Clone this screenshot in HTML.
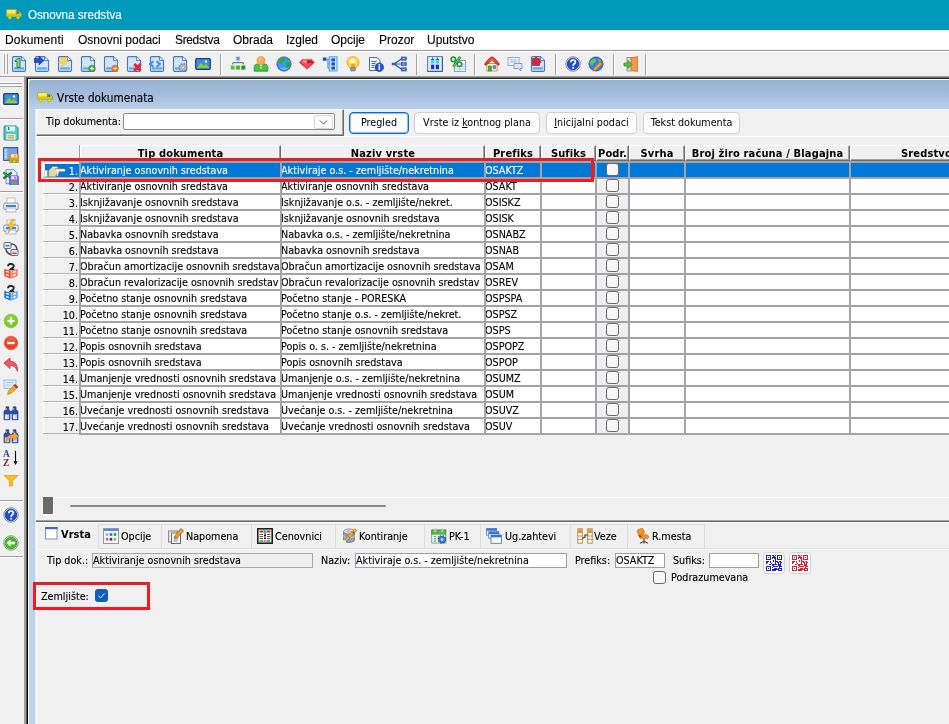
<!DOCTYPE html>
<html lang="sr"><head><meta charset="utf-8"><title>Osnovna sredstva</title>
<style>
*{box-sizing:border-box;margin:0;padding:0}
html{background:#f0f0f0}
html,body{width:949px;height:724px;overflow:hidden;background:#f0f0f0}
body{will-change:transform}
body{position:relative;font-family:"DejaVu Sans Condensed", "Liberation Sans", sans-serif;font-size:10.7px;color:#000;-webkit-font-smoothing:antialiased}
.a{position:absolute}
.t{position:absolute;white-space:nowrap;line-height:13px;height:13px;-webkit-text-stroke:.12px currentColor}
.b{font-weight:bold;font-size:11px;-webkit-text-stroke:0}
.menu{font-family:"Liberation Sans",sans-serif;font-size:12px;line-height:14px;height:14px}
.cell{-webkit-text-stroke:.12px currentColor;position:absolute;overflow:hidden;white-space:nowrap;line-height:13px;height:14px;padding-left:0;padding-top:1px}
.hd{position:absolute;height:16px;border-left:1px solid #fff;border-top:1px solid #fff;border-right:1px solid #696969;border-bottom:1px solid #696969;box-shadow:inset -1px -1px 0 #a0a0a0;text-align:center;line-height:14px;padding-top:1px;letter-spacing:.15px;overflow:hidden;white-space:nowrap}
.btn{position:absolute;height:22px;top:112px;border:1px solid #d0d0d0;border-radius:4px;background:#fdfdfd;text-align:center;line-height:20px;white-space:nowrap}
.ic{position:absolute;width:16px;height:16px}
.ic svg{display:block}
.cb{position:absolute;width:13px;height:13px;border:1px solid #6a6a6a;border-radius:3px;background:#f6f6f6}
.tab{position:absolute;top:524px;height:25px;border:1px solid #dcdcdc;background:#f0f0f0}
u{text-decoration:underline}
</style></head>
<body>
<div class="a" style="left:0;top:0;width:949px;height:30px;background:#0099bc"></div>
<div class="ic" style="left:6px;top:7px"><svg width="16" height="16" viewBox="0 0 16 16"><rect x=".6" y="2.500" width="9.800" height="7" rx=".8" fill="#e6d83a" stroke="#a8a838" stroke-width=".8"/><rect x="1.400" y="3.200" width="8.200" height="2.600" fill="#f4ec80"/><path d="M10.400 4.300h2.700l2.300 2.300v2.900h-5z" fill="#e2d430" stroke="#5a8a58" stroke-width=".8"/><rect x="11.200" y="5" width="2" height="1.900" fill="#3a6a98"/><rect x=".6" y="7.200" width="14.800" height="2.300" fill="#d4c418"/><circle cx="3.800" cy="10.600" r="1.500" fill="#f0e020" stroke="#a8a830" stroke-width=".6"/><circle cx="12" cy="10.600" r="1.500" fill="#f0e020" stroke="#a8a830" stroke-width=".6"/></svg></div>
<div class="t" style="left:28px;top:8px;font-family:Liberation Sans,sans-serif;font-size:12.5px;transform:scaleX(.93);transform-origin:0 0;line-height:15px;height:15px;color:#fff">Osnovna sredstva</div>
<div class="a" style="left:0;top:30px;width:949px;height:19px;background:#fff"></div>
<div class="t menu" style="left:5px;top:33px;letter-spacing:.15px;">Dokumenti</div>
<div class="t menu" style="left:78px;top:33px;">Osnovni podaci</div>
<div class="t menu" style="left:175px;top:33px;letter-spacing:-.35px;">Sredstva</div>
<div class="t menu" style="left:233px;top:33px;">Obrada</div>
<div class="t menu" style="left:286px;top:33px;">Izgled</div>
<div class="t menu" style="left:331px;top:33px;">Opcije</div>
<div class="t menu" style="left:379px;top:33px;">Prozor</div>
<div class="t menu" style="left:427px;top:33px;">Uputstvo</div>
<div class="a" style="left:0;top:50px;width:949px;height:1px;background:#a0a0a0"></div>
<div class="a" style="left:0;top:51px;width:949px;height:1px;background:#fff"></div>
<div class="a" style="left:3px;top:54px;width:1px;height:20px;background:#fff"></div><div class="a" style="left:4px;top:54px;width:1px;height:20px;background:#a0a0a0"></div>
<div class="a" style="left:6px;top:54px;width:1px;height:20px;background:#fff"></div><div class="a" style="left:7px;top:54px;width:1px;height:20px;background:#a0a0a0"></div>
<div class="ic" style="left:11px;top:56px"><svg width="16" height="16" viewBox="0 0 16 16"><path d="M1.500 1.800q0-1.200 1.200-1.200h7.800l4 4v9.600q0 1.200-1.200 1.200h-10.600q-1.200 0-1.200-1.200z" fill="#d4e4f8" stroke="#3f78c8" stroke-width="1.100"/><path d="M10.500 .8v3.700h3.800" fill="#f4f9ff" stroke="#3f78c8" stroke-width=".9"/><rect x="3" y="11.300" width="10" height="2.200" fill="#5aa8f0"/><path d="M4 4.5l3-2h2v9h-3v-6h-2z" fill="#8fd48f" stroke="#1f7a2f" stroke-width=".9"/></svg></div>
<div class="ic" style="left:34px;top:56px"><svg width="16" height="16" viewBox="0 0 16 16"><path d="M1.500 1.800q0-1.200 1.200-1.200h7.800l4 4v9.600q0 1.200-1.200 1.200h-10.600q-1.200 0-1.200-1.200z" fill="#d4e4f8" stroke="#3f78c8" stroke-width="1.100"/><path d="M10.500 .8v3.700h3.800" fill="#f4f9ff" stroke="#3f78c8" stroke-width=".9"/><rect x="3" y="11.300" width="10" height="2.200" fill="#5aa8f0"/><path d="M0 2.5h5v-2.5l5 4.5-5 4.5v-2.500h-5z" fill="#2a4fc0" stroke="#1a2f90" stroke-width=".6"/></svg></div>
<div class="ic" style="left:57px;top:56px"><svg width="16" height="16" viewBox="0 0 16 16"><path d="M1.500 1.800q0-1.200 1.200-1.200h7.800l4 4v9.600q0 1.200-1.200 1.200h-10.600q-1.200 0-1.200-1.200z" fill="#d4e4f8" stroke="#3f78c8" stroke-width="1.100"/><path d="M10.500 .8v3.700h3.800" fill="#f4f9ff" stroke="#3f78c8" stroke-width=".9"/><rect x="3" y="11.300" width="10" height="2.200" fill="#5aa8f0"/><path d="M5 1.500h6l-2.500 3.500h3.500l-8.500 7 2.500-5h-4.500z" fill="#f6d860" stroke="#e8b838" stroke-width=".6"/></svg></div>
<div class="ic" style="left:80px;top:56px"><svg width="16" height="16" viewBox="0 0 16 16"><path d="M1.500 1.800q0-1.200 1.200-1.200h7.800l4 4v9.600q0 1.200-1.200 1.200h-10.600q-1.200 0-1.200-1.200z" fill="#d4e4f8" stroke="#3f78c8" stroke-width="1.100"/><path d="M10.500 .8v3.700h3.800" fill="#f4f9ff" stroke="#3f78c8" stroke-width=".9"/><rect x="3" y="11.300" width="10" height="2.200" fill="#5aa8f0"/><circle cx="12" cy="12.5" r="3.3" fill="#52b043" stroke="#2d7a28" stroke-width=".6"/><path d="M10.2 12.500h3.600M12 10.700v3.600" stroke="#fff" stroke-width="1.200"/></svg></div>
<div class="ic" style="left:103px;top:56px"><svg width="16" height="16" viewBox="0 0 16 16"><path d="M1.500 1.800q0-1.200 1.200-1.200h7.800l4 4v9.600q0 1.200-1.200 1.200h-10.600q-1.200 0-1.200-1.200z" fill="#d4e4f8" stroke="#3f78c8" stroke-width="1.100"/><path d="M10.500 .8v3.700h3.800" fill="#f4f9ff" stroke="#3f78c8" stroke-width=".9"/><rect x="3" y="11.300" width="10" height="2.200" fill="#5aa8f0"/><circle cx="12" cy="12.5" r="3.3" fill="#f08030" stroke="#c05a10" stroke-width=".6"/><path d="M10.200 12.500h3.600" stroke="#fff" stroke-width="1.300"/></svg></div>
<div class="ic" style="left:126px;top:56px"><svg width="16" height="16" viewBox="0 0 16 16"><path d="M1.500 1.800q0-1.200 1.200-1.200h7.800l4 4v9.600q0 1.200-1.200 1.200h-10.600q-1.200 0-1.200-1.200z" fill="#d4e4f8" stroke="#3f78c8" stroke-width="1.100"/><path d="M10.500 .8v3.700h3.800" fill="#f4f9ff" stroke="#3f78c8" stroke-width=".9"/><rect x="3" y="11.300" width="10" height="2.200" fill="#5aa8f0"/><path d="M8.300 8l6.400 6.800M14.700 8l-6.400 6.800" stroke="#e02838" stroke-width="3"/></svg></div>
<div class="ic" style="left:149px;top:56px"><svg width="16" height="16" viewBox="0 0 16 16"><path d="M1.500 1.800q0-1.200 1.200-1.200h7.800l4 4v9.600q0 1.200-1.200 1.200h-10.600q-1.200 0-1.200-1.200z" fill="#d4e4f8" stroke="#3f78c8" stroke-width="1.100"/><path d="M10.500 .8v3.700h3.800" fill="#f4f9ff" stroke="#3f78c8" stroke-width=".9"/><rect x="3" y="11.300" width="10" height="2.200" fill="#5aa8f0"/><path d="M4.500 5.300l-3.500 2.700 3.500 2.700M7.500 5.300l3.500 2.700-3.500 2.700" fill="none" stroke="#3a8ae8" stroke-width="1.900"/></svg></div>
<div class="ic" style="left:172px;top:56px"><svg width="16" height="16" viewBox="0 0 16 16"><path d="M1.500 1.800q0-1.200 1.200-1.200h7.800l4 4v9.600q0 1.200-1.200 1.200h-10.600q-1.200 0-1.200-1.200z" fill="#d4e4f8" stroke="#3f78c8" stroke-width="1.100"/><path d="M10.500 .8v3.700h3.800" fill="#f4f9ff" stroke="#3f78c8" stroke-width=".9"/><rect x="3" y="11.300" width="10" height="2.200" fill="#5aa8f0"/><circle cx="11" cy="11.500" r="3.600" fill="#a8acb4" stroke="#80848c" stroke-width="1.800" stroke-dasharray="1.700 1.130"/><circle cx="11" cy="11.500" r="3" fill="#b4b8c0"/><circle cx="11" cy="11.500" r="1.400" fill="#e8f0fc" stroke="#6a8ac8" stroke-width=".5"/></svg></div>
<div class="ic" style="left:195px;top:56px"><svg width="16" height="16" viewBox="0 0 16 16"><rect x=".7" y="2.700" width="14.600" height="10.600" rx="1" fill="#3f8fe0" stroke="#1f3f80" stroke-width="1.300"/><path d="M2 12l4-5 3 3 2-2 3.500 4z" fill="#8fd020"/><circle cx="11" cy="5.500" r="1.200" fill="#fff27a"/></svg></div>
<div class="a" style="left:220px;top:54px;width:1px;height:21px;background:#a0a0a0"></div><div class="a" style="left:221px;top:54px;width:1px;height:21px;background:#fff"></div>
<div class="ic" style="left:230px;top:56px"><svg width="16" height="16" viewBox="0 0 16 16"><rect x="6.200" y=".8" width="3.600" height="3.600" fill="#5a9aec" stroke="#a8c8f4" stroke-width=".5"/><path d="M2.700 8.500v-1.800h10.600v1.800M8 5.500v1.200" fill="none" stroke="#5a5a5a" stroke-width=".9"/><rect x=".8" y="9.700" width="4" height="4" fill="#62c04a" stroke="#a8dc98" stroke-width=".5"/><rect x="6" y="9.700" width="4" height="4" fill="#48ac38" stroke="#a8dc98" stroke-width=".5"/><rect x="11.200" y="9.700" width="4" height="4" fill="#2a8a28" stroke="#98d088" stroke-width=".5"/></svg></div>
<div class="ic" style="left:253px;top:56px"><svg width="16" height="16" viewBox="0 0 16 16"><path d="M1.200 15.200v-4.500c0-1.800 1.700-2.700 3.300-2.700h7c1.600 0 3.300 .9 3.300 2.700v4.500z" fill="#4cc048" stroke="#2a8a38" stroke-width=".8"/><path d="M6.300 8.200l1.700 2.300 1.700-2.300z" fill="#f4faf0"/><path d="M8 10.500v2.500" stroke="#e8f4e0" stroke-width="1"/><circle cx="8" cy="4.600" r="4.200" fill="#f8a458" stroke="#e08a38" stroke-width=".5"/><circle cx="7.300" cy="3.800" r="2" fill="#fcc088" opacity=".7"/></svg></div>
<div class="ic" style="left:276px;top:56px"><svg width="16" height="16" viewBox="0 0 16 16"><circle cx="8" cy="8" r="7.100" fill="#3a9cf0" stroke="#3a4fb0" stroke-width=".9"/><path d="M3.500 12a7 7 0 0 0 9 0 8 3 0 0 0-9 0z" fill="#6ad0f8" opacity=".7"/><path d="M3.800 3.500c1.500-1.500 4-1.800 5-1s.5 2-1 2.800-1 2.700-2.500 2.700-2.800-1.500-2.800-3 .3-1 1.300-1.500zM10.500 6.500c1.500-.7 3.500-.5 3.800 1s-1 4-2.500 4.300-2-1.500-2-2.800 0-2 .7-2.500zM10 2.200l2 .5 1 1.500-2 .3z" fill="#32a83c"/></svg></div>
<div class="ic" style="left:299px;top:56px"><svg width="16" height="16" viewBox="0 0 16 16"><path d="M3.200 3.400h9.600l2.900 3.200-7.700 6.600-7.700-6.600z" fill="#e8303c" stroke="#e05060" stroke-width=".6"/><path d="M4 4.300h4v3.500l-5.300-1.200z" fill="#f88a94"/><path d="M8 4.300h4l1.800 2.300-5.800 1.200z" fill="#c81828"/><path d="M3 7l5 .8 5-.8-5 5z" fill="#f05060"/></svg></div>
<div class="ic" style="left:322px;top:56px"><svg width="16" height="16" viewBox="0 0 16 16"><rect x="7.300" y=".8" width="7.700" height="14.200" fill="#c4e6fc" stroke="#38a8f0" stroke-width="1"/><rect x="9.400" y="2.400" width="3.600" height="3" fill="#1f4fc0"/><rect x="9.400" y="6.500" width="3.600" height="3" fill="#1f4fc0"/><rect x="9.400" y="10.600" width="3.600" height="3" fill="#1f4fc0"/><rect x=".8" y="1.500" width="3.700" height="3.300" fill="#1f4fc0"/><path d="M4.500 3.200h2.800M5.900 3.200v9h1.400M5.900 8h1.400" fill="none" stroke="#4a7ad0" stroke-width=".9"/></svg></div>
<div class="ic" style="left:345px;top:56px"><svg width="16" height="16" viewBox="0 0 16 16"><path d="M8 .8c3.600 0 6 2.500 6 5.500 0 2.200-1.500 3.500-2.500 5h-7c-1-1.500-2.500-2.800-2.500-5 0-3 2.400-5.500 6-5.500z" fill="#ffd84a" stroke="#f8a428" stroke-width="1"/><ellipse cx="7.500" cy="5.300" rx="3.300" ry="2.800" fill="#fff4b0"/><rect x="6.300" y="7.500" width="3.400" height="3.500" fill="#f8a020"/><rect x="5.600" y="11.300" width="4.800" height="3.600" rx="1" fill="#9a9a9a" stroke="#6a6a6a" stroke-width=".6"/></svg></div>
<div class="ic" style="left:368px;top:56px"><svg width="16" height="16" viewBox="0 0 16 16"><path d="M1.500 1.500h7.500l3 3v10h-10.500z" fill="#f4f8ff" stroke="#4a68a8"/><path d="M3.500 5.500h5M3.500 7.500h4M3.500 9.500h3M3.500 11.500h2.500" stroke="#3f68b8" stroke-width="1.100"/><circle cx="11.300" cy="11.300" r="4.300" fill="#2456d0" stroke="#1a3898" stroke-width=".6"/><path d="M11.300 10.300v3.500" stroke="#fff" stroke-width="1.500"/><circle cx="11.300" cy="8.800" r=".9" fill="#fff"/></svg></div>
<div class="ic" style="left:391px;top:56px"><svg width="16" height="16" viewBox="0 0 16 16"><path d="M3 8l8-5.500M3 8h8M3 8l8 5.500" fill="none" stroke="#2a4fb8" stroke-width="1.200"/><rect x="10.300" y="1" width="5" height="3.200" fill="#3a5fc8" stroke="#2a4fb8" stroke-width=".6"/><rect x="10.300" y="6.400" width="5" height="3.200" fill="#3a5fc8" stroke="#2a4fb8" stroke-width=".6"/><rect x="10.300" y="11.800" width="5" height="3.200" fill="#3a5fc8" stroke="#2a4fb8" stroke-width=".6"/><path d="M11.500 2.600h2.600M11.500 8h2.600M11.500 13.400h2.600" stroke="#c8d8f8" stroke-width="1"/><rect x=".8" y="6.700" width="3.500" height="2.600" fill="#3a5fc8"/></svg></div>
<div class="a" style="left:416px;top:54px;width:1px;height:21px;background:#a0a0a0"></div><div class="a" style="left:417px;top:54px;width:1px;height:21px;background:#fff"></div>
<div class="ic" style="left:427px;top:56px"><svg width="16" height="16" viewBox="0 0 16 16"><rect x=".6" y=".6" width="14.800" height="14.800" fill="#dce8fa" stroke="#5a78b8" stroke-width="1"/><path d="M15.400 1v14.400h-14.400" fill="none" stroke="#3a4f88" stroke-width=".9"/><rect x="4" y="3.800" width="3.200" height="3.700" fill="#38d8f0"/><rect x="8.800" y="3.800" width="3.200" height="3.700" fill="#38d8f0"/><path d="M4 3.500h3.200M8.800 3.500h3.200M5.600 1.500v2M10.400 1.500v2" stroke="#2a3a6a" stroke-width=".8"/><rect x="4" y="8.700" width="3.200" height="4.500" fill="#1430e0"/><rect x="8.800" y="8.700" width="3.200" height="4.500" fill="#1430e0"/></svg></div>
<div class="ic" style="left:450px;top:56px"><svg width="16" height="16" viewBox="0 0 16 16"><rect x="4.500" y="4.500" width="11" height="11" fill="#f4f9ff" stroke="#6a9ad8" stroke-width=".9"/><path d="M5 8h10M5 10.500h10M5 13h10M9.500 8v7.500" stroke="#9ac0ec" stroke-width=".8"/><path d="M10.300 .8l-7 10" stroke="#1f7a2a" stroke-width="2.600"/><path d="M10.300 .8l-7 10" stroke="#6cd070" stroke-width="1.200"/><circle cx="3.300" cy="3.300" r="2.300" fill="#e8f8e8" stroke="#2a8a32" stroke-width="1.500"/><circle cx="9.500" cy="8.300" r="2.300" fill="#e8f8e8" stroke="#2a8a32" stroke-width="1.500"/></svg></div>
<div class="a" style="left:474px;top:54px;width:1px;height:21px;background:#a0a0a0"></div><div class="a" style="left:475px;top:54px;width:1px;height:21px;background:#fff"></div>
<div class="ic" style="left:484px;top:56px"><svg width="16" height="16" viewBox="0 0 16 16"><path d="M2.800 7.500h10.400v7.500h-10.400z" fill="#fbeec0" stroke="#a87840" stroke-width=".7"/><path d="M.7 8.300c0-1 5-7.300 7.300-7.300s7.300 6.300 7.300 7.300c0 .8-1 1.200-1.800 .5l-5.500-4.600-5.500 4.600c-.8 .7-1.800 .3-1.800-.5z" fill="#e8402a" stroke="#982010" stroke-width=".7"/><path d="M3.500 6.500l4.500-3.800 4.500 3.800-4.500-2.200z" fill="#f87858"/><rect x="4.300" y="10" width="3" height="5" fill="#4aa83a" stroke="#2a7a2a" stroke-width=".5"/><rect x="9" y="9.800" width="2.800" height="2.800" fill="#5a9ae8" stroke="#2a5aa8" stroke-width=".5"/></svg></div>
<div class="ic" style="left:507px;top:56px"><svg width="16" height="16" viewBox="0 0 16 16"><rect x="1" y="1.500" width="11" height="8" fill="#eef4fc" stroke="#7a9ad0" stroke-width=".8"/><path d="M3 4h7M3 6h7" stroke="#9ab8e0" stroke-width="1"/><path d="M7 7.500h8v5h-2l1 2.500-3-2.500h-4z" fill="#dce8f8" stroke="#6a8ac0" stroke-width=".8"/></svg></div>
<div class="ic" style="left:530px;top:56px"><svg width="16" height="16" viewBox="0 0 16 16"><path d="M1.500 1.800q0-1.200 1.200-1.200h7.800l4 4v9.600q0 1.200-1.200 1.200h-10.600q-1.200 0-1.200-1.200z" fill="#d4e4f8" stroke="#3f78c8" stroke-width="1.100"/><path d="M10.500 .8v3.700h3.800" fill="#f4f9ff" stroke="#3f78c8" stroke-width=".9"/><rect x="3" y="11.300" width="10" height="2.200" fill="#5aa8f0"/><path d="M2.500 2.500h2.500c-.8-1.800 2.800-1.800 2 0h2.500v2.500c1.800-.8 1.800 2.800 0 2v2.500h-7z" fill="#d02838" stroke="#a01020" stroke-width=".6"/></svg></div>
<div class="a" style="left:555px;top:54px;width:1px;height:21px;background:#a0a0a0"></div><div class="a" style="left:556px;top:54px;width:1px;height:21px;background:#fff"></div>
<div class="ic" style="left:565px;top:56px"><svg width="16" height="16" viewBox="0 0 16 16"><circle cx="8" cy="8" r="7.200" fill="#e8eef8" stroke="#6a7a98" stroke-width=".9"/><circle cx="8" cy="8" r="5.800" fill="#1f4fd0" stroke="#1a3090" stroke-width=".7"/><path d="M5.800 6.300c0-3 4.600-3 4.600-.2 0 1.700-2.300 1.700-2.300 3.600" fill="none" stroke="#fff" stroke-width="1.700"/><circle cx="8.100" cy="11.800" r="1" fill="#fff"/></svg></div>
<div class="ic" style="left:588px;top:56px"><svg width="16" height="16" viewBox="0 0 16 16"><circle cx="8" cy="8" r="7" fill="#3a7fe0" stroke="#2a4fa0" stroke-width=".9"/><path d="M3.500 4c2-1.500 4-1 4.500 0s-1 2.500-2 3-1 2.500-2 2.500-2-2-2-3 .5-2 1.500-2.500zM10 3c1.500 0 3 1 3.500 2.500l-2 1.500z" fill="#5fc85a"/><path d="M13 5l2 2-7 7-3 1 1-3z" fill="#f0a030" stroke="#b06a10" stroke-width=".6"/><path d="M13 5l2 2-1 1-2-2z" fill="#e03030"/></svg></div>
<div class="a" style="left:613px;top:54px;width:1px;height:21px;background:#a0a0a0"></div><div class="a" style="left:614px;top:54px;width:1px;height:21px;background:#fff"></div>
<div class="ic" style="left:623px;top:56px"><svg width="16" height="16" viewBox="0 0 16 16"><rect x="4" y="1.500" width="8" height="13.500" fill="#d8d8d8" stroke="#8a8a8a" stroke-width=".8"/><path d="M8 2l6.500-1.500v15l-6.500-1.500z" fill="#f09a50" stroke="#c06a20" stroke-width=".7"/><path d="M1 7h4v-2.500l4 4-4 4v-2.500h-4z" fill="#5fc040" stroke="#2f8a20" stroke-width=".7"/></svg></div>
<div class="a" style="left:645px;top:54px;width:1px;height:21px;background:#a0a0a0"></div><div class="a" style="left:646px;top:54px;width:1px;height:21px;background:#fff"></div>
<div class="a" style="left:0;top:76px;width:949px;height:1px;background:#a0a0a0"></div>
<div class="a" style="left:24px;top:77px;width:925px;height:1px;background:#696969"></div>
<div class="a" style="left:26px;top:78px;width:923px;height:1px;background:#2a2a2a"></div>
<div class="a" style="left:0;top:77px;width:24px;height:647px;background:#f0f0f0"></div>
<div class="a" style="left:24px;top:77px;width:1px;height:647px;background:#a3a3a3"></div>
<div class="a" style="left:25px;top:77px;width:1px;height:647px;background:#9c9c9c"></div>
<div class="a" style="left:26px;top:78px;width:1px;height:646px;background:#5a5a5a"></div>
<div class="a" style="left:27px;top:78px;width:1px;height:646px;background:#000"></div>
<div class="a" style="left:0;top:82px;width:22px;height:1px;background:#fff"></div><div class="a" style="left:0;top:83px;width:22px;height:1px;background:#a0a0a0"></div>
<div class="a" style="left:0;top:85px;width:22px;height:1px;background:#fff"></div><div class="a" style="left:0;top:86px;width:22px;height:1px;background:#a0a0a0"></div>
<div class="ic" style="left:3px;top:91px"><svg width="16" height="16" viewBox="0 0 16 16"><rect x=".7" y="2.700" width="14.600" height="10.600" rx="1" fill="#3f8fe0" stroke="#1f3f80" stroke-width="1.300"/><path d="M2 12l4-5 3 3 2-2 3.500 4z" fill="#8fd020"/><circle cx="11" cy="5.500" r="1.200" fill="#fff27a"/></svg></div>
<div class="a" style="left:0;top:118px;width:23px;height:1px;background:#a0a0a0"></div><div class="a" style="left:0;top:119px;width:23px;height:1px;background:#fff"></div>
<div class="ic" style="left:3px;top:125px"><svg width="16" height="16" viewBox="0 0 16 16"><path d="M1 1.800q0-.9 .9-.9h11.200l2 2v11.300q0 .9-.9 .9h-12.300q-.9 0-.9-.9z" fill="#5cc4bc" stroke="#2a9088" stroke-width=".9"/><rect x="3.500" y="1.400" width="8.500" height="5" fill="#d8f4f0"/><rect x="5" y="2" width="1.300" height="3" fill="#2a7a78"/><rect x="3.300" y="9" width="9.400" height="5.600" fill="#fff" stroke="#8ad0c8" stroke-width=".5"/><path d="M4.500 10.800h7M4.500 12.800h7" stroke="#a8a048" stroke-width="1.200"/></svg></div>
<div class="ic" style="left:3px;top:147px"><svg width="16" height="16" viewBox="0 0 16 16"><rect x=".7" y=".7" width="14" height="12.600" fill="#6aa8f4" stroke="#2a3a78" stroke-width="1"/><rect x="1.200" y="1.200" width="3" height="11.600" fill="#8ec0fa"/><circle cx="2.700" cy="3.500" r=".8" fill="#fff"/><circle cx="2.700" cy="6.800" r=".8" fill="#fff"/><circle cx="2.700" cy="10.100" r=".8" fill="#fff"/><path d="M6.500 6.800h8l1.300 1.300v7.700h-9.300z" fill="#f09a20" stroke="#d07a08" stroke-width=".6"/><rect x="8.300" y="7.300" width="5.500" height="3" fill="#fff4d8"/><rect x="11.300" y="7.800" width="1.200" height="2" fill="#d07a08"/><rect x="8.800" y="12.600" width="5" height="3" fill="#5fae3a"/><rect x="10" y="13.500" width="2.500" height="1.500" fill="#d8e820"/></svg></div>
<div class="ic" style="left:3px;top:169px"><svg width="16" height="16" viewBox="0 0 16 16"><path d="M3 .7h8l3 3v11h-11z" fill="#e4effc" stroke="#4a88d8" stroke-width=".9"/><path d="M.3 3.500l8.500 6M8.800 3.500l-8.500 6" stroke="#1f7a30" stroke-width="2.200"/><path d="M.3 3.500l8.500 6" stroke="#5ab868" stroke-width=".8"/><path d="M6.500 6.800h8l1.300 1.300v7.700h-9.300z" fill="#8a6ae0" stroke="#5a3ab0" stroke-width=".6"/><rect x="8.300" y="7.300" width="5.500" height="3" fill="#f4f0ff"/><rect x="11.300" y="7.800" width="1.200" height="2" fill="#5a3ab0"/><rect x="8.800" y="12.600" width="5" height="3" fill="#48c048"/></svg></div>
<div class="a" style="left:0;top:191px;width:23px;height:1px;background:#a0a0a0"></div><div class="a" style="left:0;top:192px;width:23px;height:1px;background:#fff"></div>
<div class="ic" style="left:3px;top:197px"><svg width="16" height="16" viewBox="0 0 16 16"><rect x="4" y="1" width="8" height="6" fill="#fffbe8" stroke="#a8a8a8" stroke-width=".7"/><rect x=".7" y="6" width="14.600" height="6.500" rx="1.500" fill="#e8eaf0" stroke="#8a90a0" stroke-width=".9"/><rect x="3" y="8" width="10" height="2" fill="#2a8ae8"/><rect x="3" y="11" width="10" height="4" fill="#f4f4f8" stroke="#9aa0b0" stroke-width=".7"/></svg></div>
<div class="ic" style="left:3px;top:219px"><svg width="16" height="16" viewBox="0 0 16 16"><rect x="4" y="1" width="8" height="6" fill="#fffbe8" stroke="#a8a8a8" stroke-width=".7"/><rect x=".7" y="6" width="14.600" height="6.500" rx="1.500" fill="#e8eaf0" stroke="#8a90a0" stroke-width=".9"/><rect x="3" y="8" width="10" height="2" fill="#2a8ae8"/><rect x="3" y="11" width="10" height="4" fill="#f4f4f8" stroke="#9aa0b0" stroke-width=".7"/><path d="M9.500 0l-5 7h3l-2.500 7 7-9h-3.500l3-5z" fill="#f8c830" stroke="#e08a10" stroke-width=".6"/></svg></div>
<div class="ic" style="left:3px;top:241px"><svg width="16" height="16" viewBox="0 0 16 16"><rect x="1" y="1.500" width="7" height="6" rx="1" fill="#e8eaf0" stroke="#5a6070" stroke-width=".9"/><rect x="2.500" y="4" width="4" height="1.500" fill="#2a8ae8"/><path d="M3 8c0 4 4 6 8 6M8 3c4 0 6 3 6 6" fill="none" stroke="#4a4a4a" stroke-width="1.600"/><rect x="8" y="8.500" width="7" height="6" rx="1" fill="#e8eaf0" stroke="#5a6070" stroke-width=".9"/><rect x="9.500" y="11.500" width="4" height="1.500" fill="#e03040"/></svg></div>
<div class="ic" style="left:3px;top:263px"><svg width="16" height="16" viewBox="0 0 16 16"><path d="M5 3.300c0-3.200 5.800-3.200 5.800-.2 0 1.600-2 2-3.300 3.200h3.800" fill="none" stroke="#222" stroke-width="1.800"/><path d="M1.300 5.800l6.400 2.200v7.800l-6.400-2.800z" fill="#e84a2a"/><path d="M14.700 5.800l-6.400 2.200v7.800l6.400-2.800z" fill="#f08060"/><path d="M3 8.300l3 1.100M3 11.300l3 1.300M13 8.300l-3 1.100M13 11.300l-3 1.300" stroke="#fff" stroke-width="1.300"/></svg></div>
<div class="ic" style="left:3px;top:285px"><svg width="16" height="16" viewBox="0 0 16 16"><path d="M5 3.300c0-3.200 5.800-3.200 5.800-.2 0 1.600-2 2-3.300 3.200h3.800" fill="none" stroke="#222" stroke-width="1.800"/><path d="M1.300 5.800l6.400 2.200v7.800l-6.400-2.800z" fill="#1f6fe0"/><path d="M14.700 5.800l-6.400 2.200v7.800l6.400-2.800z" fill="#6aa8f0"/><path d="M3 8.300l3 1.100M3 11.300l3 1.300M13 8.300l-3 1.100M13 11.300l-3 1.300" stroke="#fff" stroke-width="1.300"/></svg></div>
<div class="ic" style="left:3px;top:313px"><svg width="16" height="16" viewBox="0 0 16 16"><circle cx="8" cy="8" r="6.800" fill="#7ac82a" stroke="#8ccc40" stroke-width=".9"/><circle cx="8" cy="6.500" r="4.500" fill="#98dc48" opacity=".6"/><path d="M4.500 8h7M8 4.500v7" stroke="#fff" stroke-width="2"/></svg></div>
<div class="ic" style="left:3px;top:335px"><svg width="16" height="16" viewBox="0 0 16 16"><circle cx="8" cy="8" r="6.800" fill="#e8402a" stroke="#ec6a58" stroke-width=".9"/><circle cx="8" cy="6" r="4.500" fill="#f06a50" opacity=".6"/><path d="M4.200 8h7.600" stroke="#fff" stroke-width="2.200"/></svg></div>
<div class="ic" style="left:3px;top:357px"><svg width="16" height="16" viewBox="0 0 16 16"><path d="M.8 6l6.200-5v3c5 0 8 4 7.500 10.500-1.500-4-3.500-6-7.500-6v3z" fill="#e85a68" stroke="#c02838" stroke-width=".7"/></svg></div>
<div class="ic" style="left:3px;top:379px"><svg width="16" height="16" viewBox="0 0 16 16"><rect x="1" y="1" width="12" height="8.500" fill="#dcecfc" stroke="#8ab8f0" stroke-width=".9"/><path d="M3 3.500h8M3 6h6" stroke="#a8ccf4" stroke-width="1"/><path d="M12 5l3 3-7 6.500-3.500 1 .8-3.500z" fill="#f0a820" stroke="#c07810" stroke-width=".6"/><path d="M12 5l3 3-1.500 1.400-3-3z" fill="#d02838"/></svg></div>
<div class="ic" style="left:3px;top:405px"><svg width="16" height="16" viewBox="0 0 16 16"><path d="M3 1.800h2.800v2.500l1.200 1.500v9h-6v-8.500l2-2zM10.200 1.800h2.800v2.500l2 2v8.500h-6v-9l1.200-1.500z" fill="#2c4ca4" stroke="#1a2f78" stroke-width=".6"/><rect x="6.500" y="6.200" width="3" height="2.600" fill="#2c4ca4"/><rect x="1.800" y="9.300" width="4.400" height="4.900" fill="#b4ccf4"/><rect x="9.800" y="9.300" width="4.400" height="4.900" fill="#b4ccf4"/><rect x="2.500" y="10.300" width="1.600" height="3.300" fill="#f4f8ff"/><rect x="10.500" y="10.300" width="1.600" height="3.300" fill="#f4f8ff"/><path d="M3.400 3v2M10.800 3v2" stroke="#a8c0f0" stroke-width=".9"/></svg></div>
<div class="ic" style="left:3px;top:428px"><svg width="16" height="16" viewBox="0 0 16 16"><path d="M3 1.800h2.800v2.500l1.200 1.500v9h-6v-8.500l2-2zM10.200 1.800h2.800v2.500l2 2v8.500h-6v-9l1.200-1.500z" fill="#2c4ca4" stroke="#1a2f78" stroke-width=".6"/><rect x="6.500" y="6.200" width="3" height="2.600" fill="#2c4ca4"/><rect x="1.800" y="9.300" width="4.400" height="4.900" fill="#b4ccf4"/><rect x="9.800" y="9.300" width="4.400" height="4.900" fill="#b4ccf4"/><rect x="2.500" y="10.300" width="1.600" height="3.300" fill="#f4f8ff"/><rect x="10.500" y="10.300" width="1.600" height="3.300" fill="#f4f8ff"/><path d="M3.400 3v2M10.800 3v2" stroke="#a8c0f0" stroke-width=".9"/><path d="M2.500 15c0-5.500 3-8.500 8-8.500v-3l5 4.800-5 4.800v-3c-3.500 0-6 1-8 4.900z" fill="#f4a040" stroke="#c8701a" stroke-width=".5"/></svg></div>
<div class="ic" style="left:3px;top:450px"><svg width="16" height="16" viewBox="0 0 16 16"><text x="0" y="7.300" font-family="Liberation Serif, serif" font-weight="bold" font-size="9.500" fill="#2a3fb0">A</text><text x="0" y="15.800" font-family="Liberation Serif, serif" font-weight="bold" font-size="9.500" fill="#8a2030">Z</text><path d="M12.500 1v12" stroke="#000" stroke-width="1.100"/><path d="M10.500 11.300l2 3.700 2-3.700z" fill="#000"/></svg></div>
<div class="ic" style="left:3px;top:472px"><svg width="16" height="16" viewBox="0 0 16 16"><path d="M1 3.500h14l-5.500 5.500v5h-3v-5z" fill="#f8c020" stroke="#e0a010" stroke-width=".8"/></svg></div>
<div class="a" style="left:0;top:500px;width:23px;height:1px;background:#a0a0a0"></div><div class="a" style="left:0;top:501px;width:23px;height:1px;background:#fff"></div>
<div class="ic" style="left:3px;top:507px"><svg width="16" height="16" viewBox="0 0 16 16"><circle cx="8" cy="8" r="7.200" fill="#e8eef8" stroke="#6a7a98" stroke-width=".9"/><circle cx="8" cy="8" r="5.800" fill="#1f4fd0" stroke="#1a3090" stroke-width=".7"/><path d="M5.800 6.300c0-3 4.600-3 4.600-.2 0 1.700-2.300 1.700-2.300 3.600" fill="none" stroke="#fff" stroke-width="1.700"/><circle cx="8.100" cy="11.800" r="1" fill="#fff"/></svg></div>
<div class="ic" style="left:3px;top:535px"><svg width="16" height="16" viewBox="0 0 16 16"><circle cx="8" cy="8" r="7.200" fill="#e8f4e0" stroke="#5a9a4a" stroke-width=".9"/><circle cx="8" cy="8" r="5.800" fill="#4ab830" stroke="#2a8a1a" stroke-width=".7"/><path d="M3.500 8l4-3.500v2.200h4.500v2.600h-4.500v2.200z" fill="#fff"/></svg></div>
<div class="a" style="left:0;top:556px;width:23px;height:1px;background:#a0a0a0"></div><div class="a" style="left:0;top:557px;width:23px;height:1px;background:#fff"></div>
<div class="a" style="left:28px;top:79px;width:921px;height:645px;background:#bcd3ec;border-top-left-radius:4px;border-left:1px solid #fff;border-top:1px solid #fff"></div>
<div class="a" style="left:29px;top:80px;width:920px;height:29px;border-top-left-radius:3px;background:linear-gradient(#98b2d2,#a3bddb 50%,#b9d0ea)"></div>
<div class="ic" style="left:37px;top:90px"><svg width="16" height="16" viewBox="0 0 16 16"><rect x=".6" y="2.500" width="9.800" height="7" rx=".8" fill="#e6d83a" stroke="#a8a838" stroke-width=".8"/><rect x="1.400" y="3.200" width="8.200" height="2.600" fill="#f4ec80"/><path d="M10.400 4.300h2.700l2.300 2.300v2.900h-5z" fill="#e2d430" stroke="#5a8a58" stroke-width=".8"/><rect x="11.200" y="5" width="2" height="1.900" fill="#3a6a98"/><rect x=".6" y="7.200" width="14.800" height="2.300" fill="#d4c418"/><circle cx="3.800" cy="10.600" r="1.500" fill="#f0e020" stroke="#a8a830" stroke-width=".6"/><circle cx="12" cy="10.600" r="1.500" fill="#f0e020" stroke="#a8a830" stroke-width=".6"/></svg></div>
<div class="t" style="left:57px;top:91px;font-size:11.7px;line-height:14px;height:14px">Vrste dokumenata</div>
<div class="a" style="left:35px;top:109px;width:914px;height:615px;background:#f0f0f0;border-left:1px solid #e6e6ea"></div>
<div class="a" style="left:36px;top:109px;width:913px;height:615px;background:#f0f0f0;border-left:1px solid #fff"></div>
<div class="a" style="left:36px;top:109px;width:308px;height:27px;border-top:1px solid #fff;border-left:1px solid #fff;border-right:1px solid #696969;border-bottom:1px solid #696969;box-shadow:inset -1px -1px 0 #a0a0a0"></div>
<div class="a" style="left:36px;top:136px;width:913px;height:1px;background:#fff"></div>
<div class="t" style="left:46px;top:115px">Tip dokumenta:</div>
<div class="a" style="left:123px;top:113px;width:212px;height:17px;background:#fff;border:1px solid #8a8a8a;border-radius:2px"></div>
<div class="a" style="left:314px;top:115px;width:19px;height:14px;border:1px solid #d8d8d8;border-radius:2px;background:#fbfbfb"><svg width="17" height="12" viewBox="0 0 17 12"><path d="M5 4.5 L8.5 8 L12 4.5" fill="none" stroke="#555" stroke-width="1"/></svg></div>
<div class="btn" style="left:349px;width:60px;border:1px solid #0a6cc8;box-shadow:inset 0 0 0 1px rgba(10,116,212,.45);line-height:20px">Pregled</div>
<div class="btn" style="left:414px;width:126px">Vrste iz <u>k</u>ontnog plana</div>
<div class="btn" style="left:546px;width:91px"><u>I</u>nicijalni podaci</div>
<div class="btn" style="left:643px;width:97px">Tekst dokumenta</div>
<div class="hd b" style="left:80px;top:145px;width:201px;">Tip dokumenta</div>
<div class="hd b" style="left:281px;top:145px;width:204px;">Naziv vrste</div>
<div class="hd b" style="left:485px;top:145px;width:56px;">Prefiks</div>
<div class="hd b" style="left:541px;top:145px;width:55px;">Sufiks</div>
<div class="hd b" style="left:596px;top:145px;width:33px;">Podr.</div>
<div class="hd b" style="left:629px;top:145px;width:56px;">Svrha</div>
<div class="hd b" style="left:685px;top:145px;width:165px;">Broj žiro računa / Blagajna</div>
<div class="hd b" style="left:850px;top:145px;width:250px;text-align:left;padding-left:50px;">Sredstvo</div>
<div class="a" style="left:43px;top:162px;width:36px;height:15px;background:#f0f0f0;border-left:1px solid #fff;border-top:1px solid #fff"></div>
<div class="a" style="left:45px;top:164px;width:34px;height:13px;background:#0078d7"></div>
<div class="a" style="left:44px;top:165px;width:22px;height:13px"><svg width="22" height="13" viewBox="0 0 22 13"><rect x=".3" y="5.300" width="3.200" height="6.400" fill="#fff" stroke="#b8b8c8" stroke-width=".6"/><rect x="3.600" y="5.300" width=".8" height="6.400" fill="#4a6ab8"/><path d="M4.800 5.500l3.800-3.700h4.500c1 0 1 1.800 0 1.800h-2l0 .4h9c1.600 0 1.600 2.600 0 2.600h-5.300v1.300h-1.200v1.300h-1v1.300h-1v1.200h-6.800z" fill="#dedab4" stroke="#d09848" stroke-width=".7"/><path d="M12 4.600h8.500c.8 0 .8 1.400 0 1.400h-8.500z" fill="#fffaf0"/><path d="M8.500 2.600h4" stroke="#fffaf0" stroke-width=".9"/><path d="M13 7.200h1.800M13 9h1.600M13 10.700h1.200" stroke="#fff" stroke-width="1"/></svg></div>
<div class="t" style="left:43px;width:35px;text-align:right;top:165px;color:#fff;">1.</div>
<div class="a" style="left:81px;top:163px;width:868px;height:14px;background:#0078d7"></div>
<div class="cb" style="left:606px;top:163px"></div>
<div class="cell" style="left:80px;top:163px;width:199px;color:#fff;">Aktiviranje osnovnih sredstava</div>
<div class="cell" style="left:281px;top:163px;width:203px;color:#fff;">Aktiviraje o.s. - zemljište/nekretnina</div>
<div class="cell" style="left:485px;top:163px;width:55px;color:#fff;">OSAKTZ</div>
<div class="a" style="left:43px;top:177px;width:36px;height:1px;background:#b4b4b4"></div>
<div class="a" style="left:79px;top:177px;width:870px;height:2px;background:#a2a4a8"></div>
<div class="a" style="left:43px;top:178px;width:36px;height:15px;background:#f0f0f0;border-left:1px solid #fff;border-top:1px solid #fff"></div>
<div class="t" style="left:43px;width:35px;text-align:right;top:181px;">2.</div>
<div class="a" style="left:81px;top:179px;width:868px;height:14px;background:#fff"></div>
<div class="a" style="left:597px;top:179px;width:31px;height:14px;background:#f0f0f0"></div>
<div class="cb" style="left:606px;top:179px"></div>
<div class="cell" style="left:80px;top:179px;width:199px;">Aktiviranje osnovnih sredstava</div>
<div class="cell" style="left:281px;top:179px;width:203px;">Aktiviranje osnovnih sredstava</div>
<div class="cell" style="left:485px;top:179px;width:55px;">OSAKT</div>
<div class="a" style="left:43px;top:193px;width:36px;height:1px;background:#b4b4b4"></div>
<div class="a" style="left:79px;top:193px;width:870px;height:2px;background:#a2a4a8"></div>
<div class="a" style="left:43px;top:194px;width:36px;height:15px;background:#f0f0f0;border-left:1px solid #fff;border-top:1px solid #fff"></div>
<div class="t" style="left:43px;width:35px;text-align:right;top:197px;">3.</div>
<div class="a" style="left:81px;top:195px;width:868px;height:14px;background:#fff"></div>
<div class="a" style="left:597px;top:195px;width:31px;height:14px;background:#f0f0f0"></div>
<div class="cb" style="left:606px;top:195px"></div>
<div class="cell" style="left:80px;top:195px;width:199px;">Isknjižavanje osnovnih sredstava</div>
<div class="cell" style="left:281px;top:195px;width:203px;">Isknjižavanje o.s. - zemljište/nekret.</div>
<div class="cell" style="left:485px;top:195px;width:55px;">OSISKZ</div>
<div class="a" style="left:43px;top:209px;width:36px;height:1px;background:#b4b4b4"></div>
<div class="a" style="left:79px;top:209px;width:870px;height:2px;background:#a2a4a8"></div>
<div class="a" style="left:43px;top:210px;width:36px;height:15px;background:#f0f0f0;border-left:1px solid #fff;border-top:1px solid #fff"></div>
<div class="t" style="left:43px;width:35px;text-align:right;top:213px;">4.</div>
<div class="a" style="left:81px;top:211px;width:868px;height:14px;background:#fff"></div>
<div class="a" style="left:597px;top:211px;width:31px;height:14px;background:#f0f0f0"></div>
<div class="cb" style="left:606px;top:211px"></div>
<div class="cell" style="left:80px;top:211px;width:199px;">Isknjižavanje osnovnih sredstava</div>
<div class="cell" style="left:281px;top:211px;width:203px;">Isknjižavanje osnovnih sredstava</div>
<div class="cell" style="left:485px;top:211px;width:55px;">OSISK</div>
<div class="a" style="left:43px;top:225px;width:36px;height:1px;background:#b4b4b4"></div>
<div class="a" style="left:79px;top:225px;width:870px;height:2px;background:#a2a4a8"></div>
<div class="a" style="left:43px;top:226px;width:36px;height:15px;background:#f0f0f0;border-left:1px solid #fff;border-top:1px solid #fff"></div>
<div class="t" style="left:43px;width:35px;text-align:right;top:229px;">5.</div>
<div class="a" style="left:81px;top:227px;width:868px;height:14px;background:#fff"></div>
<div class="a" style="left:597px;top:227px;width:31px;height:14px;background:#f0f0f0"></div>
<div class="cb" style="left:606px;top:227px"></div>
<div class="cell" style="left:80px;top:227px;width:199px;">Nabavka osnovnih sredstava</div>
<div class="cell" style="left:281px;top:227px;width:203px;">Nabavka o.s. - zemljište/nekretnina</div>
<div class="cell" style="left:485px;top:227px;width:55px;">OSNABZ</div>
<div class="a" style="left:43px;top:241px;width:36px;height:1px;background:#b4b4b4"></div>
<div class="a" style="left:79px;top:241px;width:870px;height:2px;background:#a2a4a8"></div>
<div class="a" style="left:43px;top:242px;width:36px;height:15px;background:#f0f0f0;border-left:1px solid #fff;border-top:1px solid #fff"></div>
<div class="t" style="left:43px;width:35px;text-align:right;top:245px;">6.</div>
<div class="a" style="left:81px;top:243px;width:868px;height:14px;background:#fff"></div>
<div class="a" style="left:597px;top:243px;width:31px;height:14px;background:#f0f0f0"></div>
<div class="cb" style="left:606px;top:243px"></div>
<div class="cell" style="left:80px;top:243px;width:199px;">Nabavka osnovnih sredstava</div>
<div class="cell" style="left:281px;top:243px;width:203px;">Nabavka osnovnih sredstava</div>
<div class="cell" style="left:485px;top:243px;width:55px;">OSNAB</div>
<div class="a" style="left:43px;top:257px;width:36px;height:1px;background:#b4b4b4"></div>
<div class="a" style="left:79px;top:257px;width:870px;height:2px;background:#a2a4a8"></div>
<div class="a" style="left:43px;top:258px;width:36px;height:15px;background:#f0f0f0;border-left:1px solid #fff;border-top:1px solid #fff"></div>
<div class="t" style="left:43px;width:35px;text-align:right;top:261px;">7.</div>
<div class="a" style="left:81px;top:259px;width:868px;height:14px;background:#fff"></div>
<div class="a" style="left:597px;top:259px;width:31px;height:14px;background:#f0f0f0"></div>
<div class="cb" style="left:606px;top:259px"></div>
<div class="cell" style="left:80px;top:259px;width:199px;">Obračun amortizacije osnovnih sredstava</div>
<div class="cell" style="left:281px;top:259px;width:203px;">Obračun amortizacije osnovnih sredstava</div>
<div class="cell" style="left:485px;top:259px;width:55px;">OSAM</div>
<div class="a" style="left:43px;top:273px;width:36px;height:1px;background:#b4b4b4"></div>
<div class="a" style="left:79px;top:273px;width:870px;height:2px;background:#a2a4a8"></div>
<div class="a" style="left:43px;top:274px;width:36px;height:15px;background:#f0f0f0;border-left:1px solid #fff;border-top:1px solid #fff"></div>
<div class="t" style="left:43px;width:35px;text-align:right;top:277px;">8.</div>
<div class="a" style="left:81px;top:275px;width:868px;height:14px;background:#fff"></div>
<div class="a" style="left:597px;top:275px;width:31px;height:14px;background:#f0f0f0"></div>
<div class="cb" style="left:606px;top:275px"></div>
<div class="cell" style="left:80px;top:275px;width:199px;">Obračun revalorizacije osnovnih sredstav</div>
<div class="cell" style="left:281px;top:275px;width:203px;">Obračun revalorizacije osnovnih sredstav</div>
<div class="cell" style="left:485px;top:275px;width:55px;">OSREV</div>
<div class="a" style="left:43px;top:289px;width:36px;height:1px;background:#b4b4b4"></div>
<div class="a" style="left:79px;top:289px;width:870px;height:2px;background:#a2a4a8"></div>
<div class="a" style="left:43px;top:290px;width:36px;height:15px;background:#f0f0f0;border-left:1px solid #fff;border-top:1px solid #fff"></div>
<div class="t" style="left:43px;width:35px;text-align:right;top:293px;">9.</div>
<div class="a" style="left:81px;top:291px;width:868px;height:14px;background:#fff"></div>
<div class="a" style="left:597px;top:291px;width:31px;height:14px;background:#f0f0f0"></div>
<div class="cb" style="left:606px;top:291px"></div>
<div class="cell" style="left:80px;top:291px;width:199px;">Početno stanje osnovnih sredstava</div>
<div class="cell" style="left:281px;top:291px;width:203px;">Početno stanje - PORESKA</div>
<div class="cell" style="left:485px;top:291px;width:55px;">OSPSPA</div>
<div class="a" style="left:43px;top:305px;width:36px;height:1px;background:#b4b4b4"></div>
<div class="a" style="left:79px;top:305px;width:870px;height:2px;background:#a2a4a8"></div>
<div class="a" style="left:43px;top:306px;width:36px;height:15px;background:#f0f0f0;border-left:1px solid #fff;border-top:1px solid #fff"></div>
<div class="t" style="left:43px;width:35px;text-align:right;top:309px;">10.</div>
<div class="a" style="left:81px;top:307px;width:868px;height:14px;background:#fff"></div>
<div class="a" style="left:597px;top:307px;width:31px;height:14px;background:#f0f0f0"></div>
<div class="cb" style="left:606px;top:307px"></div>
<div class="cell" style="left:80px;top:307px;width:199px;">Početno stanje osnovnih sredstava</div>
<div class="cell" style="left:281px;top:307px;width:203px;">Početno stanje o.s. - zemljište/nekret.</div>
<div class="cell" style="left:485px;top:307px;width:55px;">OSPSZ</div>
<div class="a" style="left:43px;top:321px;width:36px;height:1px;background:#b4b4b4"></div>
<div class="a" style="left:79px;top:321px;width:870px;height:2px;background:#a2a4a8"></div>
<div class="a" style="left:43px;top:322px;width:36px;height:15px;background:#f0f0f0;border-left:1px solid #fff;border-top:1px solid #fff"></div>
<div class="t" style="left:43px;width:35px;text-align:right;top:325px;">11.</div>
<div class="a" style="left:81px;top:323px;width:868px;height:14px;background:#fff"></div>
<div class="a" style="left:597px;top:323px;width:31px;height:14px;background:#f0f0f0"></div>
<div class="cb" style="left:606px;top:323px"></div>
<div class="cell" style="left:80px;top:323px;width:199px;">Početno stanje osnovnih sredstava</div>
<div class="cell" style="left:281px;top:323px;width:203px;">Početno stanje osnovnih sredstava</div>
<div class="cell" style="left:485px;top:323px;width:55px;">OSPS</div>
<div class="a" style="left:43px;top:337px;width:36px;height:1px;background:#b4b4b4"></div>
<div class="a" style="left:79px;top:337px;width:870px;height:2px;background:#a2a4a8"></div>
<div class="a" style="left:43px;top:338px;width:36px;height:15px;background:#f0f0f0;border-left:1px solid #fff;border-top:1px solid #fff"></div>
<div class="t" style="left:43px;width:35px;text-align:right;top:341px;">12.</div>
<div class="a" style="left:81px;top:339px;width:868px;height:14px;background:#fff"></div>
<div class="a" style="left:597px;top:339px;width:31px;height:14px;background:#f0f0f0"></div>
<div class="cb" style="left:606px;top:339px"></div>
<div class="cell" style="left:80px;top:339px;width:199px;">Popis osnovnih sredstava</div>
<div class="cell" style="left:281px;top:339px;width:203px;">Popis o. s. - zemljište/nekretnina</div>
<div class="cell" style="left:485px;top:339px;width:55px;">OSPOPZ</div>
<div class="a" style="left:43px;top:353px;width:36px;height:1px;background:#b4b4b4"></div>
<div class="a" style="left:79px;top:353px;width:870px;height:2px;background:#a2a4a8"></div>
<div class="a" style="left:43px;top:354px;width:36px;height:15px;background:#f0f0f0;border-left:1px solid #fff;border-top:1px solid #fff"></div>
<div class="t" style="left:43px;width:35px;text-align:right;top:357px;">13.</div>
<div class="a" style="left:81px;top:355px;width:868px;height:14px;background:#fff"></div>
<div class="a" style="left:597px;top:355px;width:31px;height:14px;background:#f0f0f0"></div>
<div class="cb" style="left:606px;top:355px"></div>
<div class="cell" style="left:80px;top:355px;width:199px;">Popis osnovnih sredstava</div>
<div class="cell" style="left:281px;top:355px;width:203px;">Popis osnovnih sredstava</div>
<div class="cell" style="left:485px;top:355px;width:55px;">OSPOP</div>
<div class="a" style="left:43px;top:369px;width:36px;height:1px;background:#b4b4b4"></div>
<div class="a" style="left:79px;top:369px;width:870px;height:2px;background:#a2a4a8"></div>
<div class="a" style="left:43px;top:370px;width:36px;height:15px;background:#f0f0f0;border-left:1px solid #fff;border-top:1px solid #fff"></div>
<div class="t" style="left:43px;width:35px;text-align:right;top:373px;">14.</div>
<div class="a" style="left:81px;top:371px;width:868px;height:14px;background:#fff"></div>
<div class="a" style="left:597px;top:371px;width:31px;height:14px;background:#f0f0f0"></div>
<div class="cb" style="left:606px;top:371px"></div>
<div class="cell" style="left:80px;top:371px;width:199px;">Umanjenje vrednosti osnovnih sredstava</div>
<div class="cell" style="left:281px;top:371px;width:203px;">Umanjenje o.s. - zemljište/nekretnina</div>
<div class="cell" style="left:485px;top:371px;width:55px;">OSUMZ</div>
<div class="a" style="left:43px;top:385px;width:36px;height:1px;background:#b4b4b4"></div>
<div class="a" style="left:79px;top:385px;width:870px;height:2px;background:#a2a4a8"></div>
<div class="a" style="left:43px;top:386px;width:36px;height:15px;background:#f0f0f0;border-left:1px solid #fff;border-top:1px solid #fff"></div>
<div class="t" style="left:43px;width:35px;text-align:right;top:389px;">15.</div>
<div class="a" style="left:81px;top:387px;width:868px;height:14px;background:#fff"></div>
<div class="a" style="left:597px;top:387px;width:31px;height:14px;background:#f0f0f0"></div>
<div class="cb" style="left:606px;top:387px"></div>
<div class="cell" style="left:80px;top:387px;width:199px;">Umanjenje vrednosti osnovnih sredstava</div>
<div class="cell" style="left:281px;top:387px;width:203px;">Umanjenje vrednosti osnovnih sredstava</div>
<div class="cell" style="left:485px;top:387px;width:55px;">OSUM</div>
<div class="a" style="left:43px;top:401px;width:36px;height:1px;background:#b4b4b4"></div>
<div class="a" style="left:79px;top:401px;width:870px;height:2px;background:#a2a4a8"></div>
<div class="a" style="left:43px;top:402px;width:36px;height:15px;background:#f0f0f0;border-left:1px solid #fff;border-top:1px solid #fff"></div>
<div class="t" style="left:43px;width:35px;text-align:right;top:405px;">16.</div>
<div class="a" style="left:81px;top:403px;width:868px;height:14px;background:#fff"></div>
<div class="a" style="left:597px;top:403px;width:31px;height:14px;background:#f0f0f0"></div>
<div class="cb" style="left:606px;top:403px"></div>
<div class="cell" style="left:80px;top:403px;width:199px;">Uvećanje vrednosti osnovnih sredstava</div>
<div class="cell" style="left:281px;top:403px;width:203px;">Uvećanje o.s. - zemljište/nekretnina</div>
<div class="cell" style="left:485px;top:403px;width:55px;">OSUVZ</div>
<div class="a" style="left:43px;top:417px;width:36px;height:1px;background:#b4b4b4"></div>
<div class="a" style="left:79px;top:417px;width:870px;height:2px;background:#a2a4a8"></div>
<div class="a" style="left:43px;top:418px;width:36px;height:15px;background:#f0f0f0;border-left:1px solid #fff;border-top:1px solid #fff"></div>
<div class="t" style="left:43px;width:35px;text-align:right;top:421px;">17.</div>
<div class="a" style="left:81px;top:419px;width:868px;height:14px;background:#fff"></div>
<div class="a" style="left:597px;top:419px;width:31px;height:14px;background:#f0f0f0"></div>
<div class="cb" style="left:606px;top:419px"></div>
<div class="cell" style="left:80px;top:419px;width:199px;">Uvećanje vrednosti osnovnih sredstava</div>
<div class="cell" style="left:281px;top:419px;width:203px;">Uvećanje vrednosti osnovnih sredstava</div>
<div class="cell" style="left:485px;top:419px;width:55px;">OSUV</div>
<div class="a" style="left:43px;top:433px;width:36px;height:1px;background:#b4b4b4"></div>
<div class="a" style="left:79px;top:433px;width:870px;height:2px;background:#a2a4a8"></div>
<div class="a" style="left:79px;top:145px;width:1px;height:16px;background:#a0a0a0"></div>
<div class="a" style="left:43px;top:161px;width:36px;height:1px;background:#b4b4b4"></div>
<div class="a" style="left:79px;top:161px;width:870px;height:2px;background:#a2a4a8"></div>
<div class="a" style="left:79px;top:161px;width:2px;height:274px;background:#a2a4a8"></div>
<div class="a" style="left:280px;top:161px;width:2px;height:274px;background:#a2a4a8"></div>
<div class="a" style="left:484px;top:161px;width:2px;height:274px;background:#a2a4a8"></div>
<div class="a" style="left:540px;top:161px;width:2px;height:274px;background:#a2a4a8"></div>
<div class="a" style="left:595px;top:161px;width:2px;height:274px;background:#a2a4a8"></div>
<div class="a" style="left:628px;top:161px;width:2px;height:274px;background:#a2a4a8"></div>
<div class="a" style="left:684px;top:161px;width:2px;height:274px;background:#a2a4a8"></div>
<div class="a" style="left:849px;top:161px;width:2px;height:274px;background:#a2a4a8"></div>
<div class="a" style="left:38px;top:158px;width:556px;height:24px;border:3px solid #ed1c24"></div>
<div class="a" style="left:43px;top:497px;width:11px;height:18px;background:#fff"></div><div class="a" style="left:43px;top:497px;width:10px;height:17px;background:#6a6a6a"></div>
<div class="a" style="left:70px;top:505px;width:316px;height:2px;background:#8a8a8a;border-radius:1px"></div>
<div class="a" style="left:53px;top:497px;width:896px;height:1px;background:#fcfcfc"></div>
<div class="a" style="left:36px;top:520px;width:913px;height:1px;background:#a0a0a0"></div>
<div class="a" style="left:36px;top:521px;width:913px;height:1px;background:#696969"></div>
<div class="a" style="left:36px;top:522px;width:913px;height:1px;background:#f8f8f8"></div>
<div class="a" style="left:98px;top:548px;width:851px;height:1px;background:#e2e2e2"></div><div class="a" style="left:37px;top:549px;width:912px;height:1px;background:#f8f8f8"></div>
<div class="ic" style="left:45px;top:527px"><svg width="16" height="16" viewBox="0 0 16 16"><rect x=".5" y=".5" width="11.500" height="11.500" fill="#fff" stroke="#7a92b8" stroke-width="1"/><rect x="0" y="0" width="12.500" height="2.200" fill="#3a6ac0"/></svg></div>
<div class="t b" style="left:61px;top:528px">Vrsta</div>
<div class="tab" style="left:98px;width:64px"></div>
<div class="ic" style="left:103px;top:528px"><svg width="16" height="16" viewBox="0 0 16 16"><rect x=".5" y=".5" width="15" height="15" fill="#fafcff" stroke="#8a98b8" stroke-width="1"/><rect x="1" y="1" width="14" height="2" fill="#5a8ad8"/><rect x="2.7" y="5.2" width="2.600" height="2.600" fill="#a0a0e0"/><rect x="6.7" y="5.2" width="2.600" height="2.600" fill="#1f6fe8"/><rect x="10.7" y="5.2" width="2.600" height="2.600" fill="#1fa02a"/><rect x="2.7" y="10" width="2.600" height="2.600" fill="#f06030"/><rect x="6.7" y="10" width="2.600" height="2.600" fill="#1a2fb0"/><rect x="10.7" y="10" width="2.600" height="2.600" fill="#e0a020"/></svg></div>
<div class="t" style="left:121px;top:530px">Opcije</div>
<div class="tab" style="left:161px;width:91px"></div>
<div class="ic" style="left:168px;top:528px"><svg width="16" height="16" viewBox="0 0 16 16"><rect x=".7" y="3" width="9" height="11" fill="#f4f4f4" stroke="#6a6a6a" stroke-width=".9"/><rect x="3.500" y="5" width="9" height="10.500" fill="#fff" stroke="#5a5a5a" stroke-width=".9"/><path d="M5.500 9h5M5.500 11h5M5.500 13h4" stroke="#5a8a5a" stroke-width=".9"/><path d="M13 .5l2.500 2.500-6 6.500-3 .8 .8-3z" fill="#f0a030" stroke="#8a5a10" stroke-width=".7"/></svg></div>
<div class="t" style="left:186px;top:530px">Napomena</div>
<div class="tab" style="left:251px;width:85px"></div>
<div class="ic" style="left:257px;top:528px"><svg width="16" height="16" viewBox="0 0 16 16"><rect x=".8" y=".8" width="14.400" height="14.400" fill="#fff" stroke="#111" stroke-width="1.500"/><path d="M2.500 3.500h3.500M10 3.500h3.500" stroke="#e82020" stroke-width="2"/><path d="M6.500 2.300l3 2.400M9.500 2.300l-3 2.400" stroke="#10a0b0" stroke-width="1.100"/><path d="M2.500 6.500h3.500M2.500 8.500h3.500M2.500 10.500h3.500M10 6.500h3.500M10 8.500h3.500M10 10.500h3.500" stroke="#444" stroke-width=".9"/><path d="M7 6h2M7 7.500h2M7 9h2M7 10.500h2" stroke="#111" stroke-width="1"/><path d="M2.500 13h3.500M10 13h3.500" stroke="#20a030" stroke-width="1.300"/><path d="M6.500 13h3" stroke="#e020d0" stroke-width="1.300"/></svg></div>
<div class="t" style="left:275px;top:530px">Cenovnici</div>
<div class="tab" style="left:335px;width:90px"></div>
<div class="ic" style="left:342px;top:528px"><svg width="16" height="16" viewBox="0 0 16 16"><path d="M1.500 3.500v8.500c0 3.300 11 3.300 11 0v-8.500z" fill="#9aa0a8" stroke="#6a7078" stroke-width=".7"/><path d="M1.500 7.500c0 3 11 3 11 0" fill="none" stroke="#d8dce4" stroke-width=".8"/><ellipse cx="7" cy="3.500" rx="5.500" ry="2.600" fill="#d8dce0" stroke="#7a8088" stroke-width=".7"/><path d="M3.500 3.200l3-1.200 3 1-3 1.500z" fill="#f0a0b0"/><path d="M7.500 4.300l3-1.300 1 .8-2 1.200z" fill="#90d8e0"/><path d="M14.800 2.500l-1.800-1.800-7.500 7 2.300 2.300z" fill="#f0a828" stroke="#b87410" stroke-width=".7"/><path d="M5.500 7.700l2.300 2.300-3 3.200-2.600 1z" fill="#b0b4bc" stroke="#6a6a6a" stroke-width=".5"/><circle cx="2.300" cy="14" r="2" fill="#fff6a0"/><circle cx="11.500" cy="4.700" r=".9" fill="#2a4fb0"/></svg></div>
<div class="t" style="left:359px;top:530px">Kontiranje</div>
<div class="tab" style="left:424px;width:57px"></div>
<div class="ic" style="left:431px;top:528px"><svg width="16" height="16" viewBox="0 0 16 16"><rect x=".8" y="2" width="14" height="13" fill="#fff" stroke="#7a8a7a" stroke-width=".9"/><rect x=".8" y="2" width="14" height="4.200" fill="#58b840" stroke="#3a8a2a" stroke-width=".6"/><path d="M4.300 .5v3.500M11.300 .5v3.500" stroke="#e8e8e8" stroke-width="1.600"/><path d="M4.300 .5v3.500M11.300 .5v3.500" stroke="#8a8a8a" stroke-width=".5"/><path d="M3 8.500h2M6.500 8.500h2M3 10.800h2M6.500 10.800h2M3 13h2" stroke="#6ab08a" stroke-width="1.500"/><circle cx="11" cy="11.500" r="3.500" fill="#3a7ae0" stroke="#1a3f98" stroke-width="1.600" stroke-dasharray="1.600 1.150"/><circle cx="11" cy="11.500" r="3.200" fill="#3a7ae0"/><circle cx="11" cy="11.500" r="1.300" fill="#dce8ff"/></svg></div>
<div class="t" style="left:449px;top:530px">PK-1</div>
<div class="tab" style="left:480px;width:91px"></div>
<div class="ic" style="left:486px;top:528px"><svg width="16" height="16" viewBox="0 0 16 16"><rect x=".6" y=".6" width="10" height="6.500" fill="#fff" stroke="#5a78b0" stroke-width=".9"/><rect x=".6" y=".6" width="10" height="2.200" fill="#3a78d8"/><rect x="2.800" y="3.800" width="10" height="6.500" fill="#fff" stroke="#5a78b0" stroke-width=".9"/><rect x="2.800" y="3.800" width="10" height="2.200" fill="#3a78d8"/><rect x="5" y="7" width="10.400" height="8.300" fill="#fff" stroke="#5a78b0" stroke-width=".9"/><rect x="5" y="7" width="10.400" height="2.400" fill="#3a78d8"/></svg></div>
<div class="t" style="left:505px;top:530px">Ug.zahtevi</div>
<div class="tab" style="left:570px;width:58px"></div>
<div class="ic" style="left:577px;top:528px"><svg width="16" height="16" viewBox="0 0 16 16"><rect x=".8" y=".8" width="4.500" height="14.400" fill="#fffdf4" stroke="#b8904a" stroke-width="1"/><rect x="10.700" y=".8" width="4.500" height="14.400" fill="#fffdf4" stroke="#b8904a" stroke-width="1"/><rect x="1.300" y="1.300" width="3.500" height="3" fill="#f08a20"/><rect x="11.200" y="1.300" width="3.500" height="3" fill="#f08a20"/><path d="M.8 4.500h4.500M.8 8h4.500M.8 11.500h4.500M10.700 4.500h4.500M10.700 8h4.500M10.700 11.500h4.500" stroke="#b8904a" stroke-width=".9"/><path d="M5.300 10.500l2.700-1.500v-2h2.700" fill="none" stroke="#333" stroke-width="1.100"/></svg></div>
<div class="t" style="left:594px;top:530px">Veze</div>
<div class="tab" style="left:627px;width:78px"></div>
<div class="ic" style="left:635px;top:528px"><svg width="16" height="16" viewBox="0 0 16 16"><rect x="2.500" y=".8" width="6.500" height="5.500" rx="1.500" transform="rotate(-18 6 3.500)" fill="#f0922a" stroke="#c06a10" stroke-width=".6"/><ellipse cx="9" cy="8.800" rx="4.800" ry="2.200" fill="#f0922a" stroke="#c06a10" stroke-width=".6"/><path d="M3.500 7.500l3 1.200" stroke="#4a4a4a" stroke-width="1.300"/><path d="M9 11v2.300M9 13.300l-4 2M9 13.300l4 2M9 13.300v2.200" stroke="#4a4a4a" stroke-width="1.200" fill="none"/></svg></div>
<div class="t" style="left:652px;top:530px">R.mesta</div>
<div class="t" style="left:47px;top:554px">Tip dok.:</div>
<div class="a" style="left:92px;top:553px;width:221px;height:15px;border:1px solid #a8a8a8;background:#efefef"></div>
<div class="t" style="left:93px;top:554px">Aktiviranje osnovnih sredstava</div>
<div class="t" style="left:321px;top:554px">Naziv:</div>
<div class="a" style="left:355px;top:553px;width:212px;height:15px;border:1px solid #9a9ea8;background:#fff"></div>
<div class="t" style="left:356px;top:554px">Aktiviraje o.s. - zemljište/nekretnina</div>
<div class="t" style="left:575px;top:554px">Prefiks:</div>
<div class="a" style="left:615px;top:553px;width:50px;height:15px;border:1px solid #9a9ea8;background:#fff"></div>
<div class="t" style="left:616px;top:554px">OSAKTZ</div>
<div class="t" style="left:673px;top:554px">Sufiks:</div>
<div class="a" style="left:709px;top:553px;width:50px;height:15px;border:1px solid #9a9ea8;background:#fff"></div>
<div class="a" style="left:763px;top:552px;width:22px;height:22px;border:1px solid #d4d4d4;border-radius:4px;background:#fdfdfd"><svg width="16" height="16" viewBox="0 0 16 16" style="position:absolute;left:2px;top:2px" shape-rendering="crispEdges"><rect x="0" y="0" width="5" height="5" fill="#1a1ae8"/><rect x="1" y="1" width="3" height="3" fill="#fff"/><rect x="2" y="2" width="1" height="1" fill="#1a1ae8"/><rect x="11" y="0" width="5" height="5" fill="#1a1ae8"/><rect x="12" y="1" width="3" height="3" fill="#fff"/><rect x="13" y="2" width="1" height="1" fill="#1a1ae8"/><rect x="0" y="11" width="5" height="5" fill="#1a1ae8"/><rect x="1" y="12" width="3" height="3" fill="#fff"/><rect x="2" y="13" width="1" height="1" fill="#1a1ae8"/><rect x="6" y="0" width="1" height="1" fill="#1a1ae8"/><rect x="7" y="0" width="1" height="1" fill="#1a1ae8"/><rect x="9" y="0" width="1" height="1" fill="#1a1ae8"/><rect x="7" y="1" width="1" height="1" fill="#1a1ae8"/><rect x="8" y="1" width="1" height="1" fill="#1a1ae8"/><rect x="6" y="2" width="1" height="1" fill="#1a1ae8"/><rect x="7" y="2" width="1" height="1" fill="#1a1ae8"/><rect x="8" y="2" width="1" height="1" fill="#1a1ae8"/><rect x="9" y="2" width="1" height="1" fill="#1a1ae8"/><rect x="6" y="3" width="1" height="1" fill="#1a1ae8"/><rect x="8" y="3" width="1" height="1" fill="#1a1ae8"/><rect x="9" y="3" width="1" height="1" fill="#1a1ae8"/><rect x="9" y="4" width="1" height="1" fill="#1a1ae8"/><rect x="7" y="5" width="1" height="1" fill="#1a1ae8"/><rect x="9" y="5" width="1" height="1" fill="#1a1ae8"/><rect x="0" y="6" width="1" height="1" fill="#1a1ae8"/><rect x="1" y="6" width="1" height="1" fill="#1a1ae8"/><rect x="2" y="6" width="1" height="1" fill="#1a1ae8"/><rect x="4" y="6" width="1" height="1" fill="#1a1ae8"/><rect x="7" y="6" width="1" height="1" fill="#1a1ae8"/><rect x="9" y="6" width="1" height="1" fill="#1a1ae8"/><rect x="10" y="6" width="1" height="1" fill="#1a1ae8"/><rect x="11" y="6" width="1" height="1" fill="#1a1ae8"/><rect x="13" y="6" width="1" height="1" fill="#1a1ae8"/><rect x="14" y="6" width="1" height="1" fill="#1a1ae8"/><rect x="0" y="7" width="1" height="1" fill="#1a1ae8"/><rect x="1" y="7" width="1" height="1" fill="#1a1ae8"/><rect x="4" y="7" width="1" height="1" fill="#1a1ae8"/><rect x="9" y="7" width="1" height="1" fill="#1a1ae8"/><rect x="11" y="7" width="1" height="1" fill="#1a1ae8"/><rect x="12" y="7" width="1" height="1" fill="#1a1ae8"/><rect x="14" y="7" width="1" height="1" fill="#1a1ae8"/><rect x="15" y="7" width="1" height="1" fill="#1a1ae8"/><rect x="0" y="8" width="1" height="1" fill="#1a1ae8"/><rect x="5" y="8" width="1" height="1" fill="#1a1ae8"/><rect x="9" y="8" width="1" height="1" fill="#1a1ae8"/><rect x="12" y="8" width="1" height="1" fill="#1a1ae8"/><rect x="14" y="8" width="1" height="1" fill="#1a1ae8"/><rect x="3" y="9" width="1" height="1" fill="#1a1ae8"/><rect x="4" y="9" width="1" height="1" fill="#1a1ae8"/><rect x="6" y="9" width="1" height="1" fill="#1a1ae8"/><rect x="7" y="9" width="1" height="1" fill="#1a1ae8"/><rect x="8" y="9" width="1" height="1" fill="#1a1ae8"/><rect x="9" y="9" width="1" height="1" fill="#1a1ae8"/><rect x="10" y="9" width="1" height="1" fill="#1a1ae8"/><rect x="12" y="9" width="1" height="1" fill="#1a1ae8"/><rect x="13" y="9" width="1" height="1" fill="#1a1ae8"/><rect x="14" y="9" width="1" height="1" fill="#1a1ae8"/><rect x="6" y="10" width="1" height="1" fill="#1a1ae8"/><rect x="7" y="10" width="1" height="1" fill="#1a1ae8"/><rect x="12" y="10" width="1" height="1" fill="#1a1ae8"/><rect x="13" y="10" width="1" height="1" fill="#1a1ae8"/><rect x="14" y="10" width="1" height="1" fill="#1a1ae8"/><rect x="7" y="11" width="1" height="1" fill="#1a1ae8"/><rect x="8" y="11" width="1" height="1" fill="#1a1ae8"/><rect x="9" y="11" width="1" height="1" fill="#1a1ae8"/><rect x="10" y="11" width="1" height="1" fill="#1a1ae8"/><rect x="11" y="11" width="1" height="1" fill="#1a1ae8"/><rect x="13" y="11" width="1" height="1" fill="#1a1ae8"/><rect x="14" y="11" width="1" height="1" fill="#1a1ae8"/><rect x="15" y="11" width="1" height="1" fill="#1a1ae8"/><rect x="6" y="12" width="1" height="1" fill="#1a1ae8"/><rect x="13" y="12" width="1" height="1" fill="#1a1ae8"/><rect x="8" y="13" width="1" height="1" fill="#1a1ae8"/><rect x="9" y="13" width="1" height="1" fill="#1a1ae8"/><rect x="10" y="13" width="1" height="1" fill="#1a1ae8"/><rect x="12" y="13" width="1" height="1" fill="#1a1ae8"/><rect x="13" y="13" width="1" height="1" fill="#1a1ae8"/><rect x="14" y="13" width="1" height="1" fill="#1a1ae8"/><rect x="15" y="13" width="1" height="1" fill="#1a1ae8"/><rect x="6" y="14" width="1" height="1" fill="#1a1ae8"/><rect x="7" y="14" width="1" height="1" fill="#1a1ae8"/><rect x="8" y="14" width="1" height="1" fill="#1a1ae8"/><rect x="9" y="14" width="1" height="1" fill="#1a1ae8"/><rect x="10" y="14" width="1" height="1" fill="#1a1ae8"/><rect x="11" y="14" width="1" height="1" fill="#1a1ae8"/><rect x="12" y="14" width="1" height="1" fill="#1a1ae8"/><rect x="15" y="14" width="1" height="1" fill="#1a1ae8"/><rect x="6" y="15" width="1" height="1" fill="#1a1ae8"/><rect x="7" y="15" width="1" height="1" fill="#1a1ae8"/><rect x="8" y="15" width="1" height="1" fill="#1a1ae8"/><rect x="9" y="15" width="1" height="1" fill="#1a1ae8"/><rect x="12" y="15" width="1" height="1" fill="#1a1ae8"/><rect x="13" y="15" width="1" height="1" fill="#1a1ae8"/><rect x="14" y="15" width="1" height="1" fill="#1a1ae8"/><rect x="15" y="15" width="1" height="1" fill="#1a1ae8"/></svg></div>
<div class="a" style="left:789px;top:552px;width:22px;height:22px;border:1px solid #d4d4d4;border-radius:4px;background:#fdfdfd"><svg width="16" height="16" viewBox="0 0 16 16" style="position:absolute;left:2px;top:2px" shape-rendering="crispEdges"><rect x="0" y="0" width="5" height="5" fill="#e81a2a"/><rect x="1" y="1" width="3" height="3" fill="#fff"/><rect x="2" y="2" width="1" height="1" fill="#e81a2a"/><rect x="11" y="0" width="5" height="5" fill="#e81a2a"/><rect x="12" y="1" width="3" height="3" fill="#fff"/><rect x="13" y="2" width="1" height="1" fill="#e81a2a"/><rect x="0" y="11" width="5" height="5" fill="#e81a2a"/><rect x="1" y="12" width="3" height="3" fill="#fff"/><rect x="2" y="13" width="1" height="1" fill="#e81a2a"/><rect x="6" y="0" width="1" height="1" fill="#e81a2a"/><rect x="7" y="0" width="1" height="1" fill="#e81a2a"/><rect x="9" y="0" width="1" height="1" fill="#e81a2a"/><rect x="7" y="1" width="1" height="1" fill="#e81a2a"/><rect x="8" y="1" width="1" height="1" fill="#e81a2a"/><rect x="6" y="2" width="1" height="1" fill="#e81a2a"/><rect x="7" y="2" width="1" height="1" fill="#e81a2a"/><rect x="8" y="2" width="1" height="1" fill="#e81a2a"/><rect x="9" y="2" width="1" height="1" fill="#e81a2a"/><rect x="6" y="3" width="1" height="1" fill="#e81a2a"/><rect x="8" y="3" width="1" height="1" fill="#e81a2a"/><rect x="9" y="3" width="1" height="1" fill="#e81a2a"/><rect x="9" y="4" width="1" height="1" fill="#e81a2a"/><rect x="7" y="5" width="1" height="1" fill="#e81a2a"/><rect x="9" y="5" width="1" height="1" fill="#e81a2a"/><rect x="0" y="6" width="1" height="1" fill="#e81a2a"/><rect x="1" y="6" width="1" height="1" fill="#e81a2a"/><rect x="2" y="6" width="1" height="1" fill="#e81a2a"/><rect x="4" y="6" width="1" height="1" fill="#e81a2a"/><rect x="7" y="6" width="1" height="1" fill="#e81a2a"/><rect x="9" y="6" width="1" height="1" fill="#e81a2a"/><rect x="10" y="6" width="1" height="1" fill="#e81a2a"/><rect x="11" y="6" width="1" height="1" fill="#e81a2a"/><rect x="13" y="6" width="1" height="1" fill="#e81a2a"/><rect x="14" y="6" width="1" height="1" fill="#e81a2a"/><rect x="0" y="7" width="1" height="1" fill="#e81a2a"/><rect x="1" y="7" width="1" height="1" fill="#e81a2a"/><rect x="4" y="7" width="1" height="1" fill="#e81a2a"/><rect x="9" y="7" width="1" height="1" fill="#e81a2a"/><rect x="11" y="7" width="1" height="1" fill="#e81a2a"/><rect x="12" y="7" width="1" height="1" fill="#e81a2a"/><rect x="14" y="7" width="1" height="1" fill="#e81a2a"/><rect x="15" y="7" width="1" height="1" fill="#e81a2a"/><rect x="0" y="8" width="1" height="1" fill="#e81a2a"/><rect x="5" y="8" width="1" height="1" fill="#e81a2a"/><rect x="9" y="8" width="1" height="1" fill="#e81a2a"/><rect x="12" y="8" width="1" height="1" fill="#e81a2a"/><rect x="14" y="8" width="1" height="1" fill="#e81a2a"/><rect x="3" y="9" width="1" height="1" fill="#e81a2a"/><rect x="4" y="9" width="1" height="1" fill="#e81a2a"/><rect x="6" y="9" width="1" height="1" fill="#e81a2a"/><rect x="7" y="9" width="1" height="1" fill="#e81a2a"/><rect x="8" y="9" width="1" height="1" fill="#e81a2a"/><rect x="9" y="9" width="1" height="1" fill="#e81a2a"/><rect x="10" y="9" width="1" height="1" fill="#e81a2a"/><rect x="12" y="9" width="1" height="1" fill="#e81a2a"/><rect x="13" y="9" width="1" height="1" fill="#e81a2a"/><rect x="14" y="9" width="1" height="1" fill="#e81a2a"/><rect x="6" y="10" width="1" height="1" fill="#e81a2a"/><rect x="7" y="10" width="1" height="1" fill="#e81a2a"/><rect x="12" y="10" width="1" height="1" fill="#e81a2a"/><rect x="13" y="10" width="1" height="1" fill="#e81a2a"/><rect x="14" y="10" width="1" height="1" fill="#e81a2a"/><rect x="7" y="11" width="1" height="1" fill="#e81a2a"/><rect x="8" y="11" width="1" height="1" fill="#e81a2a"/><rect x="9" y="11" width="1" height="1" fill="#e81a2a"/><rect x="10" y="11" width="1" height="1" fill="#e81a2a"/><rect x="11" y="11" width="1" height="1" fill="#e81a2a"/><rect x="13" y="11" width="1" height="1" fill="#e81a2a"/><rect x="14" y="11" width="1" height="1" fill="#e81a2a"/><rect x="15" y="11" width="1" height="1" fill="#e81a2a"/><rect x="6" y="12" width="1" height="1" fill="#e81a2a"/><rect x="13" y="12" width="1" height="1" fill="#e81a2a"/><rect x="8" y="13" width="1" height="1" fill="#e81a2a"/><rect x="9" y="13" width="1" height="1" fill="#e81a2a"/><rect x="10" y="13" width="1" height="1" fill="#e81a2a"/><rect x="12" y="13" width="1" height="1" fill="#e81a2a"/><rect x="13" y="13" width="1" height="1" fill="#e81a2a"/><rect x="14" y="13" width="1" height="1" fill="#e81a2a"/><rect x="15" y="13" width="1" height="1" fill="#e81a2a"/><rect x="6" y="14" width="1" height="1" fill="#e81a2a"/><rect x="7" y="14" width="1" height="1" fill="#e81a2a"/><rect x="8" y="14" width="1" height="1" fill="#e81a2a"/><rect x="9" y="14" width="1" height="1" fill="#e81a2a"/><rect x="10" y="14" width="1" height="1" fill="#e81a2a"/><rect x="11" y="14" width="1" height="1" fill="#e81a2a"/><rect x="12" y="14" width="1" height="1" fill="#e81a2a"/><rect x="15" y="14" width="1" height="1" fill="#e81a2a"/><rect x="6" y="15" width="1" height="1" fill="#e81a2a"/><rect x="7" y="15" width="1" height="1" fill="#e81a2a"/><rect x="8" y="15" width="1" height="1" fill="#e81a2a"/><rect x="9" y="15" width="1" height="1" fill="#e81a2a"/><rect x="12" y="15" width="1" height="1" fill="#e81a2a"/><rect x="13" y="15" width="1" height="1" fill="#e81a2a"/><rect x="14" y="15" width="1" height="1" fill="#e81a2a"/><rect x="15" y="15" width="1" height="1" fill="#e81a2a"/></svg></div>
<div class="cb" style="left:653px;top:571px;width:13px;height:13px"></div>
<div class="t" style="left:671px;top:571px">Podrazumevana</div>
<div class="t" style="left:41px;top:590px">Zemljište:</div>
<div class="a" style="left:95px;top:589px;width:13px;height:13px;border-radius:3px;background:#0f5fb8"><svg width="13" height="13" viewBox="0 0 13 13"><path d="M3.5 6.700L5.500 8.700L9.700 4.500" fill="none" stroke="#fff" stroke-width="1"/></svg></div>
<div class="a" style="left:33px;top:582px;width:117px;height:28px;border:3px solid #ed1c24"></div>
</body></html>
